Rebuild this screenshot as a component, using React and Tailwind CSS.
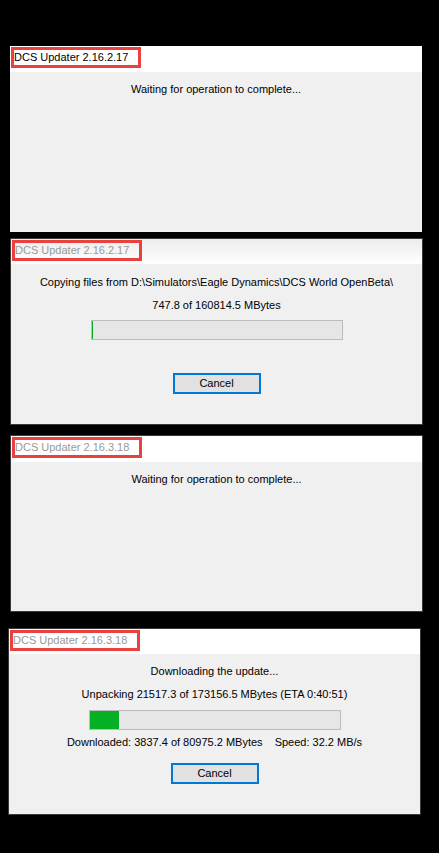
import React from "react";

const font = { fontFamily: '"Liberation Sans", Arial, sans-serif' };

const Title = ({ text, active, className = "h-[26px] bg-white" }) => (
  <div className={`flex items-start pt-px ${className}`}>
    <span
      className={`inline-flex items-center h-[21px] ml-px border-[3px] border-[#e8413e] pl-[0px] pr-[10px] text-[11px] leading-none ${
        active ? "text-black" : "text-[#999999]"
      }`}
    >
      {text}
    </span>
  </div>
);

const Button = () => (
  <button className="w-[88px] h-[21px] border-2 border-[#0078d7] bg-[#e1e1e1] text-[11px] leading-none text-black">
    Cancel
  </button>
);

const Bar = ({ fill }) => (
  <div className="w-[252px] h-[20px] border border-[#bcbcbc] bg-[#e6e6e6] flex">
    <div className="h-full bg-[#06b025]" style={{ width: fill }} />
  </div>
);

const App = () => {
  return (
    <div className="min-h-screen w-full bg-black pt-[46px] pb-[38px]" style={font}>
      {/* 1 - waiting */}
      <div className="ml-[10px] w-[412px] h-[186px] flex flex-col bg-[#f0f0f0]">
        <Title text="DCS Updater 2.16.2.17" active />
        <div className="flex-1 flex flex-col items-center pt-[9px]">
          <p className="text-[11px] leading-[16px] text-black">Waiting for operation to complete...</p>
        </div>
      </div>

      {/* 2 - copying */}
      <div className="mt-[6px] ml-[10px] w-[413px] h-[187px] flex flex-col bg-[#f0f0f0] border border-[#3a3a3a]">
        <Title text="DCS Updater 2.16.2.17" className="h-[25px] bg-gradient-to-b from-[#ececec] to-white" />
        <div className="flex-1 flex flex-col items-center pt-[10px] text-[11px] leading-[16px] text-black">
          <p>Copying files from D:\Simulators\Eagle Dynamics\DCS World OpenBeta\</p>
          <p className="mt-[7px]">747.8 of 160814.5 MBytes</p>
          <div className="mt-[7px]">
            <Bar fill="1px" />
          </div>
          <div className="mt-[33px]">
            <Button />
          </div>
        </div>
      </div>

      {/* 3 - waiting */}
      <div className="mt-[10px] ml-[10px] w-[413px] h-[177px] flex flex-col bg-[#f0f0f0] border border-[#3a3a3a]">
        <Title text="DCS Updater 2.16.3.18" />
        <div className="flex-1 flex flex-col items-center pt-[9px]">
          <p className="text-[11px] leading-[16px] text-black">Waiting for operation to complete...</p>
        </div>
      </div>

      {/* 4 - downloading */}
      <div className="mt-[16px] ml-[8px] w-[413px] h-[187px] flex flex-col bg-[#f0f0f0] border border-[#3a3a3a]">
        <Title text="DCS Updater 2.16.3.18" className="h-[25px] bg-white" />
        <div className="flex-1 flex flex-col items-center pt-[9px] text-[11px] leading-[16px] text-black">
          <p>Downloading the update...</p>
          <p className="mt-[7px]">Unpacking 21517.3 of 173156.5 MBytes (ETA 0:40:51)</p>
          <div className="mt-[8px]">
            <Bar fill="29px" />
          </div>
          <p className="mt-[4px] flex gap-[12px]">
            <span>Downloaded: 3837.4 of 80975.2 MBytes</span>
            <span>Speed: 32.2 MB/s</span>
          </p>
          <div className="mt-[13px]">
            <Button />
          </div>
        </div>
      </div>
    </div>
  );
};

export default App;
